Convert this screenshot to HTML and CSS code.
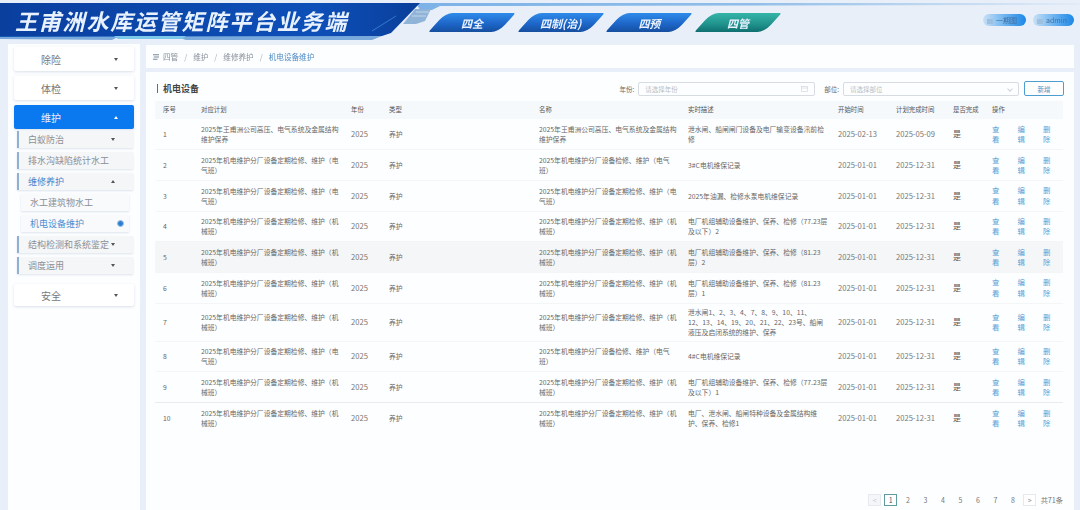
FILE: index.html
```html
<!DOCTYPE html>
<html lang="zh">
<head>
<meta charset="utf-8">
<title>王甫洲水库运管矩阵平台业务端</title>
<link rel="stylesheet" href="styles.css">
</head>
<body>
<div class="app">
  <header class="topbar">
    <svg class="banner" viewBox="0 0 1080 44" preserveAspectRatio="none" aria-hidden="true">
      <defs>
        <linearGradient id="bg" x1="0" x2="1"><stop offset="0" stop-color="#0a3f9e"/><stop offset="0.75" stop-color="#0d4fb8"/><stop offset="1" stop-color="#0a3f9a"/></linearGradient>
        <linearGradient id="ln" x1="0" x2="1"><stop offset="0" stop-color="#7db2e8"/><stop offset="0.5" stop-color="#8fbde8"/><stop offset="1" stop-color="#e3ecf7"/></linearGradient>
      </defs>
      <polygon points="416,3 1080,3 1080,5 440,6 432,10 420,10" fill="url(#ln)"/>
      <polygon points="0,3 420,3 391,33 382,36 0,37" fill="url(#bg)"/>
      <polygon points="0,36 382,36 372,40 186,40 180,38 116,38 112,40 0,39" fill="#1f6fc4" opacity="0.55"/>
      <polygon points="114,36 186,36 182,39 118,39" fill="#7cc7ea"/>
      <polygon points="415,9 431,9 425,21 416,24 403,24" fill="#8fb4d8"/>
      <path d="M416 12h13M412 16h14" stroke="#d5e5f4" stroke-width="0.7"/>
      <path d="M372 31 L396 16" stroke="#3f86dc" stroke-width="0.8"/>
    </svg>
    <h1 class="title">王甫洲水库运管矩阵平台业务端</h1>
    <nav class="tabs">
      <a class="tab">四全</a>
      <a class="tab">四制(治)</a>
      <a class="tab">四预</a>
      <a class="tab tab-on">四管</a>
    </nav>
    <div class="users">
      <span class="pill"><i class="pill-ico"></i><span>一期图</span></span>
      <span class="pill"><i class="pill-ico"></i><span>admin</span></span>
    </div>
  </header>
  <div class="body">
    <aside class="side">
      <div class="m1"><span>除险</span><i class="down"></i></div>
      <div class="m1"><span>体检</span><i class="down"></i></div>
      <div class="m1 m1-on"><span>维护</span><i class="up"></i></div>
      <div class="m2"><span>白蚁防治</span><i class="down"></i></div>
      <div class="m2"><span>排水沟缺陷统计水工</span></div>
      <div class="m2 m2-on"><span>维修养护</span><i class="up"></i></div>
      <div class="m3"><span>水工建筑物水工</span></div>
      <div class="m3 m3-on"><span>机电设备维护</span><b class="dot"></b></div>
      <div class="m2"><span>结构检测和系统鉴定</span><i class="down"></i></div>
      <div class="m2"><span>调度运用</span><i class="down"></i></div>
      <div class="m1 m1-last"><span>安全</span><i class="down"></i></div>
    </aside>
    <main class="main">
      <div class="crumbs">
        <svg class="crumb-ico" viewBox="0 0 8 8" aria-hidden="true"><path d="M0 1h8M1 4h7M0 7h6" stroke="#6a7a8c" stroke-width="1.2"/></svg>
        <span>四管</span><em>/</em><span>维护</span><em>/</em><span>维修养护</span><em>/</em><span class="crumb-now">机电设备维护</span>
      </div>
      <section class="card">
        <div class="toolbar">
          <h2 class="card-title">机电设备</h2>
          <label class="lab lab-year">年份:</label>
          <div class="inp inp-year"><span>请选择年份</span><svg class="cal" viewBox="0 0 8 8" aria-hidden="true"><rect x="0.5" y="1.5" width="7" height="6" fill="none" stroke="#ccd3da" stroke-width="0.7"/><path d="M0.5 3.5h7" stroke="#ccd3da" stroke-width="0.7"/></svg></div>
          <label class="lab lab-dept">部位:</label>
          <div class="inp inp-dept"><span>请选择部位</span><i class="chev"></i></div>
          <button class="add">新增</button>
        </div>
        <table class="grid">
          <colgroup>
            <col class="c1"><col class="c2"><col class="c3"><col class="c4"><col class="c5"><col class="c6"><col class="c7"><col class="c8"><col class="c9"><col class="c10">
          </colgroup>
          <thead>
            <tr><th>序号</th><th>对应计划</th><th>年份</th><th>类型</th><th>名称</th><th>实时描述</th><th>开始时间</th><th>计划完成时间</th><th>是否完成</th><th>操作</th></tr>
          </thead>
          <tbody>
            <tr><td>1</td><td>2025年王甫洲公司高压、电气系统及金属结构维护保养</td><td>2025</td><td>养护</td><td>2025年王甫洲公司高压、电气系统及金属结构维护保养</td><td>泄水闸、船闸闸门设备及电厂输变设备汛前检修</td><td>2025-02-13</td><td>2025-05-09</td><td class="yes">是</td><td><div class="ops"><a>查看</a><a>编辑</a><a>删除</a></div></td></tr>
            <tr><td>2</td><td>2025年机电维护分厂设备定期检修、维护（电气班）</td><td>2025</td><td>养护</td><td>2025年机电维护分厂设备检修、维护（电气班）</td><td>3#C电机维保记录</td><td>2025-01-01</td><td>2025-12-31</td><td class="yes">是</td><td><div class="ops"><a>查看</a><a>编辑</a><a>删除</a></div></td></tr>
            <tr><td>3</td><td>2025年机电维护分厂设备定期检修、维护（电气班）</td><td>2025</td><td>养护</td><td>2025年机电维护分厂设备定期检修、维护（电气班）</td><td>2025年油漏、检修水泵电机维保记录</td><td>2025-01-01</td><td>2025-12-31</td><td class="yes">是</td><td><div class="ops"><a>查看</a><a>编辑</a><a>删除</a></div></td></tr>
            <tr><td>4</td><td>2025年机电维护分厂设备定期检修、维护（机械班）</td><td>2025</td><td>养护</td><td>2025年机电维护分厂设备定期检修、维护（机械班）</td><td>电厂机组辅助设备维护、保养、检修（77.23层及以下）2</td><td>2025-01-01</td><td>2025-12-31</td><td class="yes">是</td><td><div class="ops"><a>查看</a><a>编辑</a><a>删除</a></div></td></tr>
            <tr class="hover"><td>5</td><td>2025年机电维护分厂设备定期检修、维护（机械班）</td><td>2025</td><td>养护</td><td>2025年机电维护分厂设备定期检修、维护（机械班）</td><td>电厂机组辅助设备维护、保养、检修（81.23层）2</td><td>2025-01-01</td><td>2025-12-31</td><td class="yes">是</td><td><div class="ops"><a>查看</a><a>编辑</a><a>删除</a></div></td></tr>
            <tr><td>6</td><td>2025年机电维护分厂设备定期检修、维护（机械班）</td><td>2025</td><td>养护</td><td>2025年机电维护分厂设备定期检修、维护（机械班）</td><td>电厂机组辅助设备维护、保养、检修（81.23层）1</td><td>2025-01-01</td><td>2025-12-31</td><td class="yes">是</td><td><div class="ops"><a>查看</a><a>编辑</a><a>删除</a></div></td></tr>
            <tr><td>7</td><td>2025年机电维护分厂设备定期检修、维护（机械班）</td><td>2025</td><td>养护</td><td>2025年机电维护分厂设备定期检修、维护（机械班）</td><td>泄水闸1、2、3、4、7、8、9、10、11、<br>12、13、14、19、20、21、22、23号、船闸液压及启闭系统的维护、保养</td><td>2025-01-01</td><td>2025-12-31</td><td class="yes">是</td><td><div class="ops"><a>查看</a><a>编辑</a><a>删除</a></div></td></tr>
            <tr><td>8</td><td>2025年机电维护分厂设备定期检修、维护（电气班）</td><td>2025</td><td>养护</td><td>2025年机电维护分厂设备检修、维护（电气班）</td><td>4#C电机维保记录</td><td>2025-01-01</td><td>2025-12-31</td><td class="yes">是</td><td><div class="ops"><a>查看</a><a>编辑</a><a>删除</a></div></td></tr>
            <tr><td>9</td><td>2025年机电维护分厂设备定期检修、维护（机械班）</td><td>2025</td><td>养护</td><td>2025年机电维护分厂设备定期检修、维护（机械班）</td><td>电厂机组辅助设备维护、保养、检修（77.23层及以下）1</td><td>2025-01-01</td><td>2025-12-31</td><td class="yes">是</td><td><div class="ops"><a>查看</a><a>编辑</a><a>删除</a></div></td></tr>
            <tr><td>10</td><td>2025年机电维护分厂设备定期检修、维护（机械班）</td><td>2025</td><td>养护</td><td>2025年机电维护分厂设备定期检修、维护（机械班）</td><td>电厂、泄水闸、船闸特种设备及金属结构维护、保养、检修1</td><td>2025-01-01</td><td>2025-12-31</td><td class="yes">是</td><td><div class="ops"><a>查看</a><a>编辑</a><a>删除</a></div></td></tr>
          </tbody>
        </table>
        <div class="pager">
          <span class="pg pg-box pg-off">&lt;</span><span class="pg pg-box pg-on">1</span><span class="pg">2</span><span class="pg">3</span><span class="pg">4</span><span class="pg">5</span><span class="pg">6</span><span class="pg">7</span><span class="pg">8</span><span class="pg pg-box">&gt;</span><span class="total">共71条</span>
        </div>
      </section>
    </main>
  </div>
</div>
</body>
</html>
```
FILE: styles.css
```css
* { box-sizing: border-box; }
html, body { margin: 0; height: 100%; overflow: hidden; }
body { font-family: "Noto Sans CJK SC", "Liberation Sans", sans-serif; background: #e9eff8; color: #555; }
.app { width: 1080px; height: 510px; display: flex; flex-direction: column; filter: blur(0.5px); }

.topbar { height: 44px; position: relative; display: flex; align-items: flex-start; flex: none; }
.banner { position: absolute; inset: 0; width: 100%; height: 100%; }
.title { position: relative; margin: 7px 0 0 15px; width: 400px; font-size: 22px; line-height: 26px; font-weight: 700; font-style: italic; letter-spacing: 1.8px; color: #e8f2ff; white-space: nowrap; flex: none; }
.tabs { position: relative; z-index: 0; display: flex; margin: 13px 0 0 22px; gap: 18.7px; }
.tab { position: relative; width: 70px; height: 19px; color: #eaf3ff; display: flex; align-items: center; justify-content: center; font-size: 11px; font-weight: 700; font-style: italic; }
.tab::before { content: ""; position: absolute; inset: 0; z-index: -1; transform: skewX(-42deg); border-radius: 7px 2px 7px 2px; background: linear-gradient(180deg, #2f8bea, #1c64c6 60%, #154f9f); }
.tab-on::before { background: linear-gradient(180deg, #35b5a8, #1f928c 60%, #0f6f70); }
.users { position: absolute; right: 6px; top: 14px; display: flex; gap: 7px; }
.pill { height: 12px; border-radius: 6px; background: linear-gradient(90deg, #c8e0f6, #6db4f0 50%, #1c87e8); color: #44709f; font-size: 7px; line-height: 12px; padding: 0 4px; display: flex; align-items: center; gap: 3px; white-space: nowrap; }
.pill:first-child { width: 43px; }
.pill:last-child { width: 41px; }
.pill-ico { width: 6px; height: 5px; background: #9dbfe0; flex: none; margin-top: 3px; }

.body { flex: 1; display: flex; min-height: 0; padding-left: 8px; gap: 6px; }
.side { width: 132px; background: #fdfeff; padding: 3px 6px; display: flex; flex-direction: column; flex: none; }
.m1 { height: 24px; margin-bottom: 5px; background: #fff; border-radius: 2px; box-shadow: 0 1px 3px rgba(90,120,160,.22); display: flex; align-items: center; font-size: 10px; color: #777; padding: 0 16px 0 27px; justify-content: space-between; flex: none; }
.m1-on { background: #0a78ee; color: #e6f2ff; margin-bottom: 2px; }
.m1-last { margin-top: 6px; height: 22px; }
.down, .up { width: 0; height: 0; border-left: 2.5px solid transparent; border-right: 2.5px solid transparent; flex: none; }
.down { border-top: 3px solid #555; }
.up { border-bottom: 3px solid #555; }
.m1-on .up { border-bottom-color: #fff; }
.m2 { height: 17px; margin: 0 1px 4px 3px; background: #f5f6f8; border-left: 2px solid #8fb0d0; box-shadow: 0 1px 2px rgba(90,120,160,.2); display: flex; align-items: center; justify-content: space-between; font-size: 9px; color: #8a8f96; padding: 0 18px 0 9px; white-space: nowrap; flex: none; }
.m2-on { color: #3f86cf; }
.m3 { height: 17px; margin: 0 5px 4px 7px; background: #f9fafb; box-shadow: 0 1px 2px rgba(90,120,160,.2); display: flex; align-items: center; justify-content: space-between; font-size: 9px; color: #8a8f96; padding: 0 5px 0 9px; flex: none; }
.m3-on { color: #4a8fd2; }
.dot { width: 7px; height: 7px; border-radius: 50%; background: #2f7fd0; border: 1px solid #9cc4ea; flex: none; }

.main { width: 928px; display: flex; flex-direction: column; gap: 4px; flex: none; padding-top: 1px; }
.crumbs { height: 23px; background: #fdfeff; display: flex; align-items: center; font-size: 7.6px; color: #8a929c; padding-left: 7px; flex: none; }
.crumbs em { font-style: normal; margin: 0 6px; color: #a8adb4; }
.crumb-ico { width: 6px; height: 6px; margin-right: 4px; }
.crumb-now { color: #4d8cc4; }
.card { flex: 1; background: #fdfeff; padding: 6px 0 0 9px; display: flex; flex-direction: column; position: relative; min-height: 0; }
.toolbar { height: 21px; display: flex; align-items: center; flex: none; }
.card-title { margin: 0 auto 0 2px; border-left: 1.5px solid #2a7cc7; padding-left: 5px; font-size: 9px; line-height: 9px; font-weight: 700; color: #444; }
.lab { font-size: 6.5px; color: #666; margin-right: 4px; }
.inp { height: 14px; border: 1px solid #d6dce2; border-radius: 2px; display: flex; align-items: center; justify-content: space-between; font-size: 6.5px; color: #b8bec5; padding: 0 6px; }
.inp-year { width: 177px; margin-right: 9px; }
.inp-dept { width: 176px; margin-right: 5px; }
.cal { width: 7px; height: 7px; }
.chev { width: 4px; height: 4px; border-right: 1px solid #ccd3da; border-bottom: 1px solid #ccd3da; transform: rotate(45deg); }
.add { width: 40px; height: 15px; margin-right: 10px; padding: 0; background: #fff; border: 1px solid #4f9ccf; border-radius: 2px; color: #4a8fc4; font-size: 6.5px; font-family: inherit; }

.grid { width: 908px; margin-top: 2px; border-collapse: collapse; table-layout: fixed; font-size: 6.8px; line-height: 10.2px; color: #666; flex: none; }
.c1 { width: 38px; } .c2 { width: 150px; } .c3 { width: 38px; } .c4 { width: 150px; } .c5 { width: 149px; } .c6 { width: 150px; } .c7 { width: 58px; } .c8 { width: 57px; } .c9 { width: 39px; } .c10 { width: 79px; }
.grid th { height: 18px; background: #f6f9fc; padding: 0 0 0 8px; font-weight: 400; text-align: left; color: #555; font-size: 6.4px; }
.grid td { height: 30.7px; padding: 0 2px 0 8px; border-bottom: 1px solid #f3f5f7; }
.grid tr:nth-child(7) td { height: 38px; }
.grid td:nth-child(7), .grid td:nth-child(8) { font-size: 7.6px; color: #777; }
.grid td:nth-child(3) { font-size: 7.6px; color: #777; }
.grid tr:last-child td { border-bottom: 0; }
.grid tr:nth-child(9) td { border-bottom-color: #e9ecef; }
.grid td.yes { font-size: 8px; color: #555; }
.hover td { background: #f5f6f7; }
.ops { display: flex; gap: 16.5px; width: 78px; }
.ops a { width: 9px; color: #5a9fd6; font-size: 7.4px; line-height: 10.5px; flex: none; }

.pager { position: absolute; right: 11px; bottom: 4px; display: flex; align-items: center; font-size: 7px; color: #777; }
.pg { width: 17.5px; text-align: center; line-height: 12px; }
.pg-box { width: 13px; height: 12px; border: 1px solid #e6eaee; margin: 0 1.5px; color: #888; line-height: 10px; background: #fff; }
.pg-off { color: #ccc; background: #f5f6f8; }
.pg-on { border-color: #5f9c9f; color: #357; margin-right: 2px; }
.total { margin-left: 3px; font-size: 7.2px; }
```
